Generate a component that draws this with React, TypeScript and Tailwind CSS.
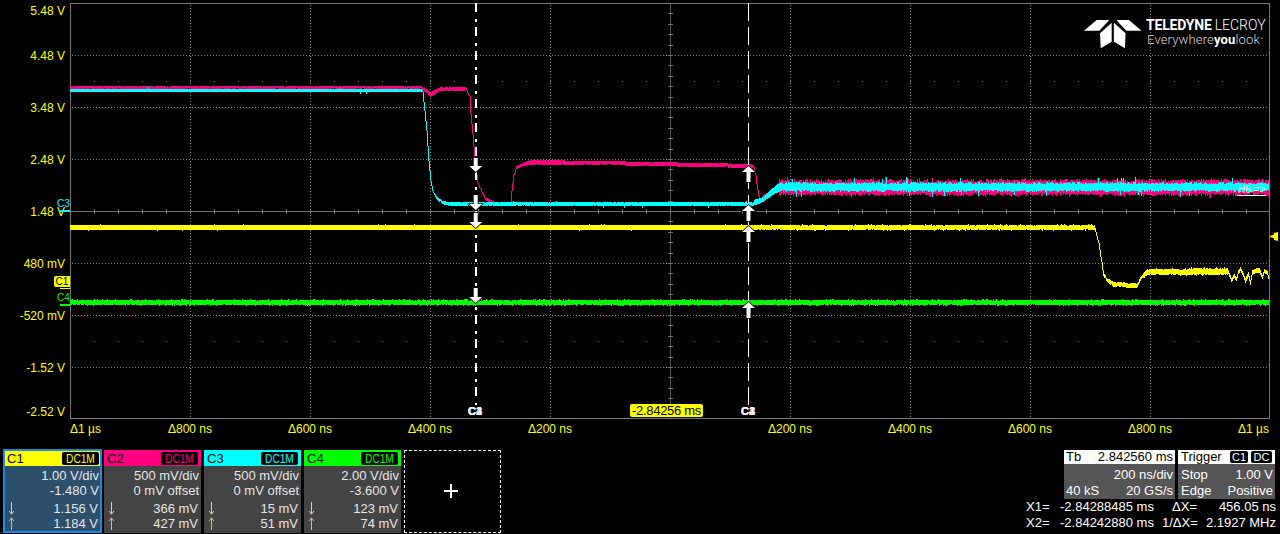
const ink = { c1: "#ffff00", c2: "#ff0080", c3: "#00ffff", c4: "#00ff00" };

let seedState = 12345;
const rnd = () => {
  seedState = (seedState * 1103515245 + 12345) & 0x7fffffff;
  return seedState / 0x7fffffff;
};

type Key = [number, number, number];
type Opt = { p?: number; a?: number; jt?: number; jb?: number; hole?: number };

function seg(keys: Key[], o: Opt = {}) {
  const { p = 0, a = 0, jt = 0, jb = 0, hole = 0 } = o;
  let d = "";
  let prevT: number | null = null;
  let prevB: number | null = null;
  for (let i = 0; i < keys.length - 1; i++) {
    const [x0, t0, b0] = keys[i];
    const [x1, t1, b1] = keys[i + 1];
    for (let x = x0; x < x1; x++) {
      const f = (x - x0) / (x1 - x0);
      let t = t0 + (t1 - t0) * f + rnd() * jt;
      let b = b0 + (b1 - b0) * f - rnd() * jb;
      if (rnd() < p) {
        if (rnd() < 0.5) t -= a;
        else b += a;
      }
      if (rnd() < hole) {
        if (rnd() < 0.5) t += 1;
        else b -= 1;
      }
      t = Math.round(t);
      b = Math.round(b);
      const top = prevB !== null && prevB < t ? prevB : t;
      const bot = prevT !== null && prevT > b ? prevT : b;
      d += `M${x + 0.5} ${top}V${bot}`;
      prevT = t;
      prevB = b;
    }
  }
  return d;
}

const yellow =
  seg([[70, 225, 230], [750, 225, 230]], { p: 0.03, a: 1 }) +
  seg([[750, 225, 230], [1095, 225, 230]], { p: 0.15, a: 1, hole: 0.2 }) +
  seg([[1095, 228, 232], [1098, 240, 244], [1101, 259, 263], [1103, 272, 276], [1107, 278, 282], [1113, 282, 287], [1137, 283, 288]], { hole: 0.25 }) +
  seg([[1137, 283, 287], [1140, 277, 281], [1147, 269, 275], [1228, 268, 275]], { hole: 0.5, p: 0.2, a: 1 }) +
  seg([[1228, 270, 274], [1231, 278, 282], [1234, 274, 278], [1236, 277, 281], [1238, 270, 274], [1240, 267, 271], [1243, 273, 277], [1245, 278, 283], [1248, 272, 277], [1250, 280, 285], [1252, 270, 274], [1256, 268, 273], [1259, 268, 273], [1262, 275, 279], [1264, 269, 273], [1267, 271, 275], [1269, 278, 282]]);

const green = seg([[70, 300, 305], [1269, 300, 305]], { p: 0.25, a: 1, hole: 0.2 });

const pink =
  seg([[70, 86, 89], [422, 86, 89]], { hole: 0.2 }) +
  seg([[422, 87, 90], [426, 89, 93], [430, 92, 97], [435, 90, 94], [440, 87, 91], [466, 87, 91]], { hole: 0.2 }) +
  seg([[466, 88, 91], [469, 95, 97], [470, 112, 114], [472, 132, 134], [474, 156, 158], [477, 181, 183], [480, 188, 190], [485, 197, 200], [490, 200, 203], [497, 203, 206], [510, 203, 205], [511, 191, 194], [513, 175, 178], [516, 166, 169], [522, 163, 166], [530, 160, 165], [600, 161, 165], [753, 164, 168]], { hole: 0.2 }) +
  seg([[753, 165, 167], [755, 173, 175], [756, 183, 184], [758, 194, 196], [760, 199, 201], [763, 195, 198], [768, 192, 195], [773, 188, 192], [779, 182, 191]]) +
  seg([[779, 179, 196], [1269, 179, 196]], { jt: 3, jb: 3, p: 0.08, a: 2 });

const cyan =
  seg([[70, 89, 92], [422, 89, 92]], { p: 0.015, a: 2 }) +
  seg([[422, 90, 92], [424, 109, 111], [426, 129, 131], [428, 159, 161], [430, 179, 181], [432, 189, 191], [436, 196, 199], [442, 201, 204], [450, 202, 206], [752, 202, 206]], { p: 0.03, a: 1.5, hole: 0.1 }) +
  seg([[752, 203, 206], [755, 199, 205], [761, 198, 203], [765, 195, 200], [770, 190, 197], [775, 186, 193], [780, 182, 192]]) +
  seg([[780, 182, 192], [1269, 182, 192]], { jt: 2, jb: 2, p: 0.05, a: 5 });

function Arrow({ x, tip, up, len }: { x: number; tip: number; up?: boolean; len: number }) {
  const s = up ? 1 : -1;
  const pts = [
    [x - 2, tip + s * len],
    [x + 2, tip + s * len],
    [x + 2, tip + s * 6],
    [x + 6.5, tip + s * 6],
    [x, tip],
    [x - 6.5, tip + s * 6],
    [x - 2, tip + s * 6],
  ];
  return <polygon points={pts.map((p) => p.join(",")).join(" ")} fill="#fff" stroke="#000" strokeWidth="1.5" paintOrder="stroke" />;
}

function Plot() {
  const xs = [190, 310, 430, 550, 790, 910, 1030, 1150];
  const ys = [55, 107, 159, 263, 315, 367];
  const hTicks = Array.from({ length: 51 }, (_, i) => 70 + i * 24).filter((x) => x > 70 && x < 1269);
  const vTicks = Array.from({ length: 39 }, (_, i) => 3 + i * 10.4);
  return (
    <svg width="1210" height="420" viewBox="70 0 1210 420" className="block shrink-0">
      <g shapeRendering="crispEdges">
        {xs.map((x) => (
          <line key={x} x1={x + 0.5} y1="5" x2={x + 0.5} y2="419" stroke="#808080" strokeDasharray="1 2" />
        ))}
        {ys.map((y) => (
          <line key={y} x1="72" y1={y + 0.5} x2="1269" y2={y + 0.5} stroke="#808080" strokeDasharray="1 2" />
        ))}
        {[81, 341].map((y) =>
          hTicks
            .filter((x) => x !== 670)
            .map((x) => <rect key={`${y}-${x}`} x={x} y={y} width="1" height="1" fill="#707070" />),
        )}
        <line x1="670.5" y1="3" x2="670.5" y2="419" stroke="#505050" />
        {vTicks.map((y) => (
          <line key={y} x1="668" y1={Math.round(y) + 0.5} x2="673" y2={Math.round(y) + 0.5} stroke="#707070" />
        ))}
        <line x1="70" y1="211.5" x2="1269" y2="211.5" stroke="#707070" />
        {hTicks.map((x) => (
          <line key={x} x1={x + 0.5} y1="209" x2={x + 0.5} y2="214" stroke="#707070" />
        ))}
        <rect x="70.5" y="3.5" width="1199" height="415" fill="none" stroke="#787878" />
        <path d={yellow} stroke={ink.c1} fill="none" />
        <path d={green} stroke={ink.c4} fill="none" />
        <path d={pink} stroke={ink.c2} fill="none" />
        <path d={cyan} stroke={ink.c3} fill="none" />
        <line x1="476" y1="3" x2="476" y2="405" stroke="#fff" strokeWidth="2" strokeDasharray="9 7 3 5" />
        <line x1="748.5" y1="3" x2="748.5" y2="405" stroke="#fff" strokeDasharray="18 6" />
        <line x1="1237" y1="195.5" x2="1266" y2="195.5" stroke="#fff" />
      </g>
      <Arrow x={475.7} tip={172} len={14} />
      <Arrow x={475.7} tip={210} len={15} />
      <Arrow x={475.7} tip={228} len={15} />
      <Arrow x={475.7} tip={303} len={15} />
      <Arrow x={748.5} tip={166} up len={16} />
      <Arrow x={748.5} tip={205} up len={16} />
      <Arrow x={748.5} tip={226} up len={16} />
      <Arrow x={748.5} tip={302} up len={16} />
      <polygon points="1270,236 1274,234.5 1274,233 1278,232 1278,241 1274,240 1274,238 1270,237" fill={ink.c1} />
      <g fill="#fff">
        <polygon points="1096.7,20 1109.3,20 1099.3,30.7 1084,30.7" />
        <polygon points="1100,33.3 1111.7,22.7 1111.7,41.7 1100.7,48.3" />
        <polygon points="1128.9,20 1116.3,20 1126.3,30.7 1141.6,30.7" />
        <polygon points="1125.6,33.3 1113.9,22.7 1113.9,41.7 1124.9,48.3" />
      </g>
    </svg>
  );
}

function CursorTag({ cx }: { cx: number }) {
  const left = cx === 475 ? "left-[468px]" : "left-[741px]";
  return (
    <div className={`absolute top-[405px] ${left} h-[13px] w-[15px] text-[11px] font-bold leading-[13px] text-white`}>
      <span className="absolute left-0 top-0 text-[#ff4fa0]">C1</span>
      <span className="absolute left-0 top-0 text-[#9fe8ff]">C2</span>
      <span className="absolute left-0 top-0 text-white">C3</span>
      <span className="absolute left-0 top-0 text-[#f4f4ff]">C4</span>
    </div>
  );
}

function YAxis() {
  const rows = ["4.48 V", "3.48 V", "2.48 V", "1.48 V", "480 mV", "-520 mV", "-1.52 V"];
  return (
    <div className="flex h-[420px] w-[70px] shrink-0 flex-col pr-[5px] text-right text-[12px] leading-[16px] text-[#ffff00]">
      <div className="h-[30px] pt-[3px]">5.48 V</div>
      {rows.map((r) => (
        <div key={r} className="flex h-[52px] items-center justify-end">
          {r}
        </div>
      ))}
      <div className="flex h-[26px] items-end justify-end">-2.52 V</div>
    </div>
  );
}

function XAxis() {
  const cells = ["Δ800 ns", "Δ600 ns", "Δ400 ns", "Δ200 ns", "", "Δ200 ns", "Δ400 ns", "Δ600 ns", "Δ800 ns"];
  return (
    <div className="flex h-[29px] pl-[70px] pt-[1px] text-[12px] leading-[16px] text-[#ffff00]">
      <div className="w-[60px]">Δ1 µs</div>
      {cells.map((c, i) => (
        <div key={i} className="w-[120px] text-center">
          {c}
        </div>
      ))}
      <div className="w-[59px] text-right">Δ1 µs</div>
    </div>
  );
}

function Tiny({ up, color }: { up?: boolean; color: string }) {
  return (
    <svg width="7" height="13" viewBox="0 0 7 13" className="block shrink-0">
      {up ? (
        <path d="M3.5 13V1M1 4L3.5 .8L6 4" stroke={color} fill="none" />
      ) : (
        <path d="M3.5 0V12M1 9L3.5 12.2L6 9" stroke={color} fill="none" />
      )}
    </svg>
  );
}

function Channel({ name, color, rows, sel, text }: { name: string; color: string; rows: string[]; sel?: boolean; text: string }) {
  return (
    <div
      className={
        sel
          ? "-mr-px -mt-px h-[84px] w-[99px] shrink-0 border-2 border-[#1b8ae0] bg-[#2d4f6c]"
          : "h-[83px] w-[97px] shrink-0 bg-[#444444]"
      }
    >
      <div className={`flex items-center justify-between ${sel ? "h-[15px] pl-[2px] pr-[1px]" : "h-[16px] pl-[3px] pr-[3px]"}`} style={{ backgroundColor: color }}>
        <span className="text-[13px] leading-[15px] text-black">{name}</span>
        <span className="flex h-[13px] w-[37px] items-center justify-center rounded-[2px] bg-black">
          <span className={`inline-block scale-x-[0.78] whitespace-nowrap text-[13px] leading-[13px] ${text}`}>DC1M</span>
        </span>
      </div>
      <div className={`text-right text-[13px] leading-[15px] text-[#e6e6e6] ${sel ? "pl-[3px] pr-[1px] pt-[2px]" : "pl-[4px] pr-[2px] pt-[2px]"}`}>
        <div>{rows[0]}</div>
        <div>{rows[1]}</div>
        <div className="mt-[3px] flex items-center justify-between">
          <Tiny color="#d4d4c0" />
          <span className="pr-[1px]">{rows[2]}</span>
        </div>
        <div className="flex items-center justify-between">
          <Tiny up color="#c8c08c" />
          <span className="pr-[1px]">{rows[3]}</span>
        </div>
      </div>
    </div>
  );
}

function AddBox() {
  return (
    <div className="flex h-[83px] w-[97px] shrink-0 items-center justify-center border border-dashed border-white pb-[2px] pr-[3px]">
      <svg width="14" height="14" viewBox="0 0 14 14" className="block">
        <path d="M7 0V14M0 7H14" stroke="#fff" strokeWidth="2" />
      </svg>
    </div>
  );
}

function Readout() {
  return (
    <div className="ml-auto flex w-[254px] shrink-0 flex-col text-[13px] leading-[16px] text-white">
      <div className="flex h-[49px] justify-end gap-[3px] pr-[5px]">
        <div className="w-[111px] bg-[#555555]">
          <div className="flex h-[14px] items-center justify-between bg-white pl-[2px] pr-[2px] text-black">
            <span>Tb</span>
            <span>2.842560 ms</span>
          </div>
          <div className="pr-[2px] pt-[3px] text-right leading-[16px]">200 ns/div</div>
          <div className="flex justify-between pl-[2px] pr-[2px]">
            <span>40 kS</span>
            <span>20 GS/s</span>
          </div>
        </div>
        <div className="w-[97px] bg-[#555555]">
          <div className="flex h-[14px] items-center bg-white pl-[3px] pr-[3px] text-black">
            <span>Trigger</span>
            <span className="ml-auto flex h-[12px] w-[18px] items-center justify-center rounded-[2px] bg-black text-[11px] leading-[12px] text-white">C1</span>
            <span className="ml-[3px] flex h-[12px] w-[21px] items-center justify-center rounded-[2px] bg-black text-[11px] leading-[12px] text-white">DC</span>
          </div>
          <div className="flex justify-between pl-[3px] pr-[2px] pt-[3px]">
            <span>Stop</span>
            <span>1.00 V</span>
          </div>
          <div className="flex justify-between pl-[3px] pr-[2px]">
            <span>Edge</span>
            <span>Positive</span>
          </div>
        </div>
      </div>
      <div className="flex h-[16px] whitespace-nowrap">
        <span className="w-[34px]">X1=</span>
        <span className="w-[102px]">-2.84288485 ms</span>
        <span className="w-[35px] text-right">ΔX=</span>
        <span className="flex-1 pr-[4px] text-right">456.05 ns</span>
      </div>
      <div className="flex h-[16px] whitespace-nowrap">
        <span className="w-[34px]">X2=</span>
        <span className="w-[102px]">-2.84242880 ms</span>
        <span className="w-[35px] text-right">1/ΔX=</span>
        <span className="flex-1 pr-[4px] text-right">2.1927 MHz</span>
      </div>
    </div>
  );
}

export default function App() {
  return (
    <div className="relative h-[534px] w-[1280px] overflow-hidden bg-black [font-family:'Liberation_Sans',Arial,sans-serif]">
      <div className="flex h-[420px]">
        <YAxis />
        <Plot />
      </div>
      <XAxis />
      <div className="flex items-start gap-[3px] pl-[3px] pt-[1px]">
        <Channel sel name="C1" color={ink.c1} text="text-[#ffff00]" rows={["1.00 V/div", "-1.480 V", "1.156 V", "1.184 V"]} />
        <Channel name="C2" color={ink.c2} text="text-[#ff0080]" rows={["500 mV/div", "0 mV offset", "366 mV", "427 mV"]} />
        <Channel name="C3" color={ink.c3} text="text-[#00ffff]" rows={["500 mV/div", "0 mV offset", "15 mV", "51 mV"]} />
        <Channel name="C4" color={ink.c4} text="text-[#00ff00]" rows={["2.00 V/div", "-3.600 V", "123 mV", "74 mV"]} />
        <AddBox />
        <Readout />
      </div>

      <div className="absolute left-[1146px] top-[18px] whitespace-nowrap text-[14px] leading-[15px] text-white [font-family:Roboto,sans-serif]">
        <span className="font-bold tracking-[-0.2px]">TELEDYNE</span>
        <span className="ml-[3px] font-light">LECROY</span>
      </div>
      <div className="absolute left-[1147px] top-[32px] whitespace-nowrap text-[13px] leading-[15px] tracking-[0.15px] text-[#d8d8d8] [font-family:Roboto,sans-serif]">
        <span className="font-light">Everywhere</span>
        <span className="font-bold text-white">you</span>
        <span className="font-light">look</span>
        <span className="align-top text-[5px]">™</span>
      </div>

      <div className="absolute left-[1238px] top-[184px] whitespace-nowrap text-[10px] leading-[11px] text-[#f0f0e0]">H6 =&gt;</div>

      <div className="absolute left-[57px] top-[198px] text-[10px] leading-[12px] text-[#00ffff]">C3</div>
      <div className="absolute left-[60px] top-[210px] h-[2px] w-[10px] bg-[#00ffff]" />
      <div className="absolute left-[54px] top-[276px] flex h-[11px] w-[16px] items-center justify-center rounded-l-[2px] bg-[#ffff00] text-[10px] leading-[11px] text-black">C1</div>
      <div className="absolute left-[60px] top-[288px] h-px w-[10px] bg-[#ffff00]" />
      <div className="absolute left-[57px] top-[292px] text-[10px] leading-[12px] text-[#00ff00]">C4</div>
      <div className="absolute left-[60px] top-[304px] h-[2px] w-[10px] bg-[#00ff00]" />

      <div className="absolute left-[630px] top-[404px] flex h-[13px] w-[73px] items-center justify-center rounded-[2px] bg-[#ffff00] text-[13px] leading-[13px] tracking-[-0.3px] text-black">
        -2.84256 ms
      </div>
      <CursorTag cx={475} />
      <CursorTag cx={748} />
    </div>
  );
}
